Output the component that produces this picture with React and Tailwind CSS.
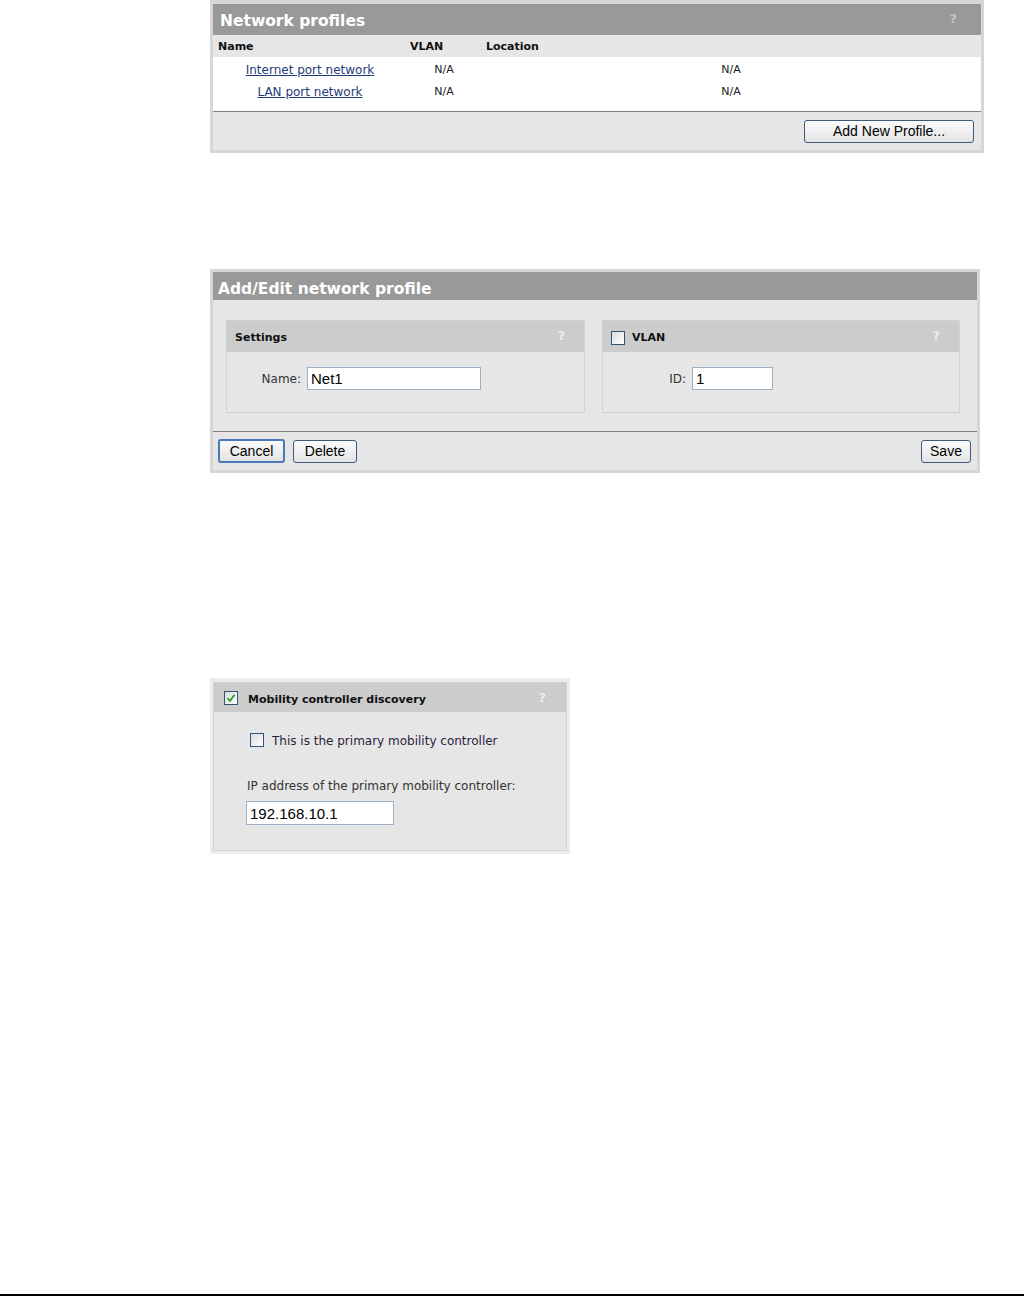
import React from "react";

const verdana = "font-['DejaVu_Sans',Verdana,sans-serif]";
const arial = "font-['Liberation_Sans',Arial,sans-serif]";

const Help = ({ className = "" }) => (
  <span className={`${verdana} font-bold text-[13px] leading-none ${className}`}>?</span>
);

const Button = ({ children, className = "", focused = false }) => (
  <button
    type="button"
    className={`${arial} text-[14px] leading-none text-black rounded-[3px] bg-gradient-to-b from-[#fbfbfb] to-[#e3e3e3] ${
      focused
        ? "border-2 border-[#4a7ab5]"
        : "border border-[#3d5a78]"
    } ${className}`}
  >
    {children}
  </button>
);

const Checkbox = ({ checked = false }) => (
  <span className="w-[14px] h-[14px] border border-[#2f5478] bg-gradient-to-br from-[#dcdcdc] to-white flex items-center justify-center shrink-0">
    {checked && (
      <svg width="10" height="10" viewBox="0 0 10 10">
        <path d="M1.5 5.2 L4 7.8 L8.6 1.8" fill="none" stroke="#21a321" strokeWidth="1.8" />
      </svg>
    )}
  </span>
);

const TextInput = ({ value, className = "" }) => (
  <div
    className={`${arial} bg-white border border-[#9db0c4] text-[15px] leading-none text-black flex items-center pl-[3px] ${className}`}
  >
    {value}
  </div>
);

const SubPanel = ({ title, check, children, className = "" }) => (
  <div className={`border border-[#d2d2d2] bg-[#e6e6e6] flex flex-col ${className}`}>
    <div className="h-[31px] bg-[#cccccc] flex items-center justify-between pl-[8px] pr-[19px]">
      <div className="flex items-center gap-[7px] pt-[2px]">
        {check !== undefined && <Checkbox checked={check} />}
        <span className={`${verdana} font-bold text-[11px] text-[#111] mt-[2px]`}>{title}</span>
      </div>
      <Help className="text-[#ececec] mb-[2px]" />
    </div>
    {children}
  </div>
);

const profiles = [
  { name: "Internet port network", vlan: "N/A", location: "N/A" },
  { name: "LAN port network", vlan: "N/A", location: "N/A" },
];

export default function App() {
  return (
    <div className="w-[1024px] h-[1296px] bg-white flex flex-col">
      {/* Network profiles */}
      <div className="ml-[210px] w-[774px] border-[3px] border-t-4 border-[#d6d6d6] bg-[#e6e6e6]">
        <div className="h-[31px] bg-[#999999] flex items-center justify-between pl-[7px] pr-[24px]">
          <span className={`${verdana} font-bold text-[15.5px] text-white mt-[5px]`}>Network profiles</span>
          <Help className="text-[#c4c4c4] mb-[2px]" />
        </div>
        <div className={`${verdana} h-[22px] pt-[3px] flex items-center font-bold text-[11px] text-[#111]`}>
          <span className="w-[194px] pl-[5px]">Name</span>
          <span className="w-[74px] pl-[3px]">VLAN</span>
          <span className="pl-[5px]">Location</span>
        </div>
        <div className={`${verdana} bg-white pt-[2px] h-[54px] text-[12px] text-[#222]`}>
          {profiles.map((p) => (
            <div key={p.name} className="h-[22px] flex items-center">
              <span className="w-[194px] text-center">
                <a href="#" className="text-[#1f3b78] underline">
                  {p.name}
                </a>
              </span>
              <span className="w-[74px] text-center text-[11px]">{p.vlan}</span>
              <span className="flex-1 text-center text-[11px]">{p.location}</span>
            </div>
          ))}
        </div>
        <div className="border-t border-[#808080] h-[39px] flex items-center justify-end pr-[7px]">
          <Button className="w-[170px] h-[23px]">Add New Profile...</Button>
        </div>
      </div>

      {/* Add/Edit network profile */}
      <div className="mt-[116px] ml-[210px] w-[770px] border-[3px] border-[#d6d6d6] bg-[#e6e6e6]">
        <div className="h-[28px] bg-[#999999] flex items-center pl-[5px]">
          <span className={`${verdana} font-bold text-[15.5px] text-white mt-[7px]`}>Add/Edit network profile</span>
        </div>
        <div className="flex gap-[17px] pt-[20px] pb-[18px] pl-[13px]">
          <SubPanel title="Settings" className="w-[359px] h-[93px]">
            <div className="flex-1 flex items-start pt-[15px]">
              <span className={`${verdana} w-[80px] h-[23px] flex items-center justify-end pr-[6px] text-[12px] text-[#333]`}>Name:</span>
              <TextInput value="Net1" className="w-[174px] h-[23px]" />
            </div>
          </SubPanel>
          <SubPanel title="VLAN" check={false} className="w-[358px] h-[93px]">
            <div className="flex-1 flex items-start pt-[15px]">
              <span className={`${verdana} w-[89px] h-[23px] flex items-center justify-end pr-[6px] text-[12px] text-[#333]`}>ID:</span>
              <TextInput value="1" className="w-[81px] h-[23px]" />
            </div>
          </SubPanel>
        </div>
        <div className="border-t border-[#808080] h-[39px] flex items-center pl-[5px] pr-[6px]">
          <Button focused className="w-[67px] h-[24px]">Cancel</Button>
          <Button className="w-[64px] h-[23px] ml-[8px]">Delete</Button>
          <Button className="w-[50px] h-[23px] ml-auto">Save</Button>
        </div>
      </div>

      {/* Mobility controller discovery */}
      <div className="mt-[205px] ml-[210px] w-[360px] p-[3px] pt-[4px] bg-[#ececec]">
        <div className="border border-[#d2d2d2] bg-[#e6e6e6] h-[169px] flex flex-col">
          <div className="h-[29px] bg-[#cccccc] flex items-center justify-between pl-[10px] pr-[20px]">
            <div className="flex items-center gap-[10px] pt-[1px]">
              <Checkbox checked />
              <span className={`${verdana} font-bold text-[11px] text-[#111] mt-[4px]`}>Mobility controller discovery</span>
            </div>
            <Help className="text-[#ececec]" />
          </div>
          <div className={`${verdana} text-[12px] text-[#333] pl-[32px] pt-[18px]`}>
            <div className="flex items-center gap-[8px] pl-[4px]">
              <Checkbox />
              <span className="text-[#2a2240] mt-[2px]">This is the primary mobility controller</span>
            </div>
            <div className="mt-[27px] pl-[1px]">IP address of the primary mobility controller:</div>
            <TextInput value="192.168.10.1" className="mt-[6px] w-[148px] h-[24px]" />
          </div>
        </div>
      </div>

      <div className="mt-auto h-[2px] bg-black" />
    </div>
  );
}
